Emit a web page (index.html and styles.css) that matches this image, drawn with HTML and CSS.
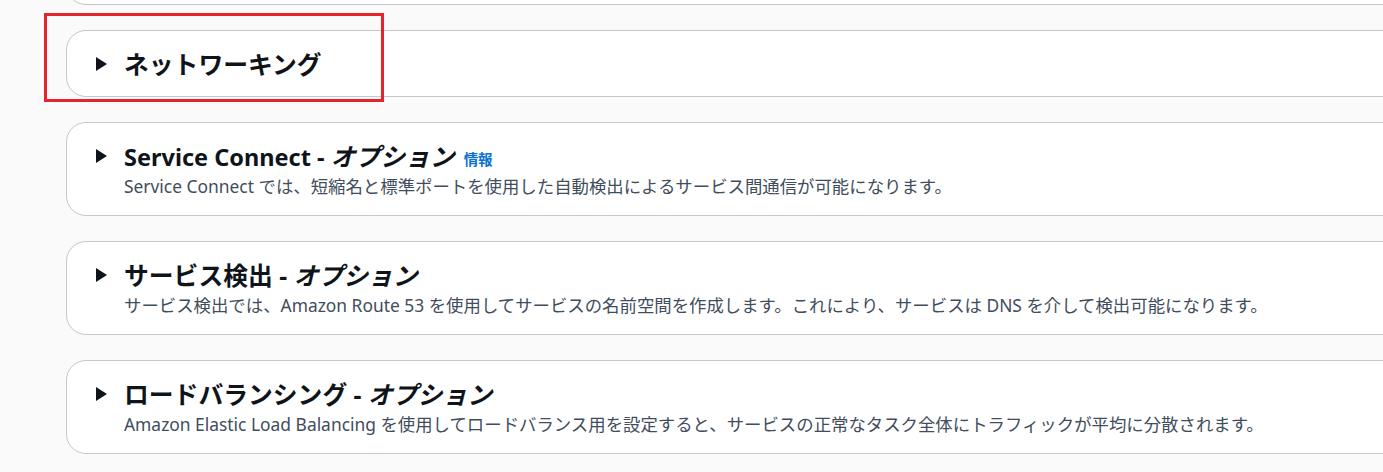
FILE: index.html
```html
<!DOCTYPE html>
<html lang="ja">
<head>
<meta charset="utf-8">
<title>サービス設定</title>
<link rel="stylesheet" href="styles.css">
</head>
<body>
<div class="page">
  <div class="card card-partial"></div>

  <section class="card">
    <div class="header">
      <svg class="caret" width="11" height="14" viewBox="0 0 11 14"><polygon points="0,0 11,7 0,14" fill="#0f141a"/></svg>
      <h2 class="title">ネットワーキング</h2>
    </div>
  </section>

  <section class="card">
    <div class="header">
      <svg class="caret" width="11" height="14" viewBox="0 0 11 14"><polygon points="0,0 11,7 0,14" fill="#0f141a"/></svg>
      <h2 class="title"><span class="latin">Service Connect - </span><em>オプション</em></h2>
      <a class="info">情報</a>
    </div>
    <p class="desc">Service Connect では、短縮名と標準ポートを使用した自動検出によるサービス間通信が可能になります。</p>
  </section>

  <section class="card">
    <div class="header">
      <svg class="caret" width="11" height="14" viewBox="0 0 11 14"><polygon points="0,0 11,7 0,14" fill="#0f141a"/></svg>
      <h2 class="title">サービス検出 - <em>オプション</em></h2>
    </div>
    <p class="desc">サービス検出では、Amazon Route 53 を使用してサービスの名前空間を作成します。これにより、サービスは DNS を介して検出可能になります。</p>
  </section>

  <section class="card">
    <div class="header">
      <svg class="caret" width="11" height="14" viewBox="0 0 11 14"><polygon points="0,0 11,7 0,14" fill="#0f141a"/></svg>
      <h2 class="title">ロードバランシング - <em>オプション</em></h2>
    </div>
    <p class="desc">Amazon Elastic Load Balancing を使用してロードバランス用を設定すると、サービスの正常なタスク全体にトラフィックが平均に分散されます。</p>
  </section>
</div>
<div class="highlight"></div>
</body>
</html>
```
FILE: styles.css
```css
html, body {
  margin: 0;
  padding: 0;
  background: #fafafa;
  overflow: hidden;
  height: 100%;
}
body {
  position: relative;
  font-family: "Noto Sans", "Noto Sans CJK JP", sans-serif;
  color: #0f141a;
}
.page {
  display: flex;
  flex-direction: column;
  gap: 25px;
  padding-left: 66px;
  margin-top: -57px;
  width: 1400px;
}
.card {
  background: #ffffff;
  border: 1px solid #c6c6cd;
  border-radius: 20px;
  padding: 18px 20px 17px 29px;
}
.card-partial {
  height: 60px;
  padding: 0;
}
.header {
  display: flex;
  align-items: center;
  height: 30px;
}
.caret {
  flex: none;
  margin-right: 17px;
}
.title {
  margin: 0;
  font-size: 24.8px;
  line-height: 30px;
  font-weight: 700;
  color: #0f141a;
  white-space: nowrap;
}
.title .latin {
  font-size: 23.5px;
}
.title em {
  font-style: italic;
}
.info {
  margin-left: 9px;
  margin-top: 4px;
  font-size: 14.5px;
  font-weight: 700;
  color: #0972d3;
}
.desc {
  margin: 3px 0 0 28px;
  font-size: 17.4px;
  line-height: 24px;
  color: #414d5c;
  white-space: nowrap;
}
.highlight {
  position: absolute;
  left: 44px;
  top: 13px;
  width: 334px;
  height: 83px;
  border: 3px solid #e3242b;
}
```
